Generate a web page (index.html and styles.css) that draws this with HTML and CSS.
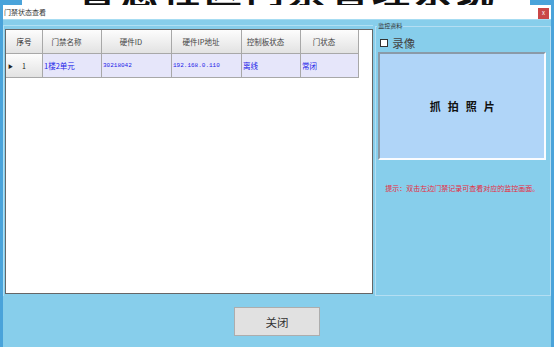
FILE: index.html
```html
<!DOCTYPE html>
<html lang="zh-CN">
<head>
  <meta charset="UTF-8" />
  <title>门禁状态查看</title>
  <link rel="stylesheet" href="styles.css">
</head>
<body>
  <div class="backdrop">
    <span class="backdrop-title">智慧社区门禁管理系统</span>
  </div>

  <div class="window">
    <div class="titlebar">
      <span class="title">门禁状态查看</span>
      <span class="close-x">x</span>
    </div>

    <div class="content">
      <div class="main">
        <div class="left-panel">
          <div class="grid">
            <div class="grid-row">
              <div class="cell head row-head">序号</div>
              <div class="cell head">门禁名称</div>
              <div class="cell head">硬件ID</div>
              <div class="cell head">硬件IP地址</div>
              <div class="cell head">控制板状态</div>
              <div class="cell head">门状态</div>
            </div>
            <div class="grid-row">
              <div class="cell row-head"><span class="arrow">&#9654;</span><span class="row-no">1</span></div>
              <div class="cell data">1楼2单元</div>
              <div class="cell data"><span class="num">30218042</span></div>
              <div class="cell data"><span class="num">192.168.0.110</span></div>
              <div class="cell data">离线</div>
              <div class="cell data">常闭</div>
            </div>
          </div>
        </div>

        <div class="groupbox">
          <span class="legend">监控资料</span>
          <label class="record">
            <span class="checkbox"></span>
            <span>录像</span>
          </label>
          <div class="photo">抓拍照片</div>
          <p class="hint">提示：双击左边门禁记录可查看对应的监控画面。</p>
        </div>
      </div>

      <div class="actions">
        <button class="btn-close">关闭</button>
      </div>
    </div>
  </div>
</body>
</html>
```

FILE: styles.css
```css
html {
  background: #4aa3da;
}

body {
  margin: 0;
  width: 554px;
  height: 347px;
  overflow: hidden;
  font-family: "Noto Sans CJK SC", "Noto Sans", sans-serif;
}

/* the main screen behind the dialog, only its bottom edge shows */
.backdrop {
  position: relative;
  height: 5px;
  overflow: hidden;
  clip-path: inset(0);
  background: linear-gradient(to right, #4aa3da 0, #4aa3da 22px, #ffffff 22px, #ffffff 530px, #4aa3da 530px);
}

.backdrop-title {
  position: absolute;
  left: 78px;
  bottom: -2px;
  font-size: 38px;
  line-height: 38px;
  font-weight: bold;
  color: #111;
  letter-spacing: 4px;
  white-space: nowrap;
}

.window {
  position: relative;
  margin: 0 3px;
  width: 548px;
}

.titlebar {
  height: 14px;
  background: #fff;
  display: flex;
  align-items: center;
  justify-content: space-between;
  padding: 0 2px 0 1px;
}

.title {
  font-size: 7px;
  color: #333;
  line-height: 14px;
}

.close-x {
  width: 11px;
  height: 11px;
  margin-top: 2px;
  background: #c94646;
  color: #fff;
  font-size: 6px;
  line-height: 10px;
  text-align: center;
}

.content {
  height: 328px;
  background: #87ceeb;
  border-top: 1px solid #a6dcf2;
  box-sizing: border-box;
}

.main {
  display: flex;
  padding-top: 5px;
}

.left-panel {
  width: 369px;
  border-top: 1px solid #b0e0f4;
  border-left: 1px solid #b0e0f4;
  padding: 3px 0 0 1px;
}

.grid {
  width: 366px;
  height: 263px;
  border: 1px solid #666;
  background: #fff;
}

.grid-row {
  display: grid;
  grid-template-columns: 37px 59px 70px 70px 59px 58px;
  height: 24px;
}

.cell {
  box-sizing: border-box;
  border-right: 1px solid #a8a8a8;
  border-bottom: 1px solid #a8a8a8;
  font-size: 7.5px;
  display: flex;
  align-items: center;
}

.head {
  justify-content: center;
  padding-right: 11px;
  color: #444;
  background: linear-gradient(#fdfdfd, #e2e2e2);
}

.head.row-head {
  padding-right: 0;
}

.row-head {
  background: linear-gradient(#fdfdfd, #e2e2e2);
  color: #222;
}

.arrow {
  font-size: 5px;
  margin-left: 2px;
  width: 14px;
}

.row-no {
  font-size: 7px;
}

.data {
  background: #e6e6fa;
  color: #2222e8;
  padding-left: 1px;
}

.num {
  font-family: "Liberation Mono", monospace;
  font-size: 6px;
}

.groupbox {
  position: relative;
  margin: 1px 0 0 2px;
  width: 176px;
  height: 270px;
  box-sizing: border-box;
  border: 1px solid #b4def2;
}

.legend {
  position: absolute;
  top: -5px;
  left: 1px;
  padding: 0 1px;
  background: #87ceeb;
  font-size: 6px;
  line-height: 8px;
  color: #333;
}

.record {
  display: flex;
  align-items: center;
  gap: 4px;
  margin: 11px 0 0 4px;
  height: 10px;
  font-size: 11.5px;
  color: #444;
}

.checkbox {
  width: 6px;
  height: 6px;
  border: 1px solid #333;
  background: #fff;
}

.photo {
  margin: 4px 0 0 2px;
  width: 168px;
  height: 108px;
  box-sizing: border-box;
  border: 2px solid;
  border-color: #8a9aa8 #fafcff #fafcff #8a9aa8;
  background: #b0d5f8;
  display: flex;
  align-items: center;
  justify-content: center;
  font-size: 11px;
  font-weight: bold;
  letter-spacing: 7px;
  padding-left: 7px;
  color: #111;
}

.hint {
  margin: 23px 0 0 9px;
  font-size: 7px;
  color: #e82a40;
  white-space: nowrap;
}

.actions {
  display: flex;
  justify-content: center;
  padding-top: 11px;
}

.btn-close {
  width: 86px;
  height: 29px;
  background: #e1e1e1;
  border: 1px solid #adadad;
  font-family: "Noto Sans CJK SC", sans-serif;
  font-size: 11.5px;
  color: #333;
}
```
